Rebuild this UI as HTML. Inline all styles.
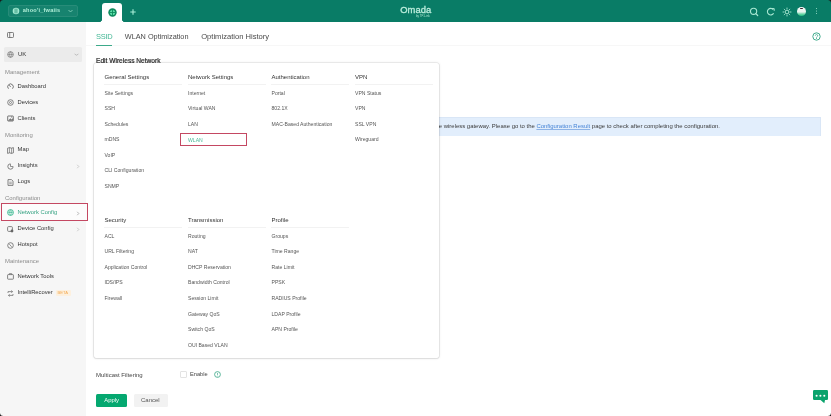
<!DOCTYPE html>
<html><head><meta charset="utf-8">
<style>
*{box-sizing:border-box;margin:0;padding:0}
html,body{width:831px;height:416px;overflow:hidden;background:#fff;-webkit-font-smoothing:antialiased;font-family:"Liberation Sans",sans-serif;color:#333}
.abs{position:absolute}
.t{position:absolute;white-space:nowrap;line-height:1}
#hdr{position:absolute;left:0;top:0;width:831px;height:22px;background:#097c66}
#side{position:absolute;left:0;top:22px;width:86px;height:394px;background:#f6f6f6}
.sl{position:absolute;left:5px;font-size:5.95px;color:#8c8c8c;line-height:1;white-space:nowrap}
.si{position:absolute;left:17.6px;font-size:5.8px;color:#333;line-height:1;white-space:nowrap}
.ic{position:absolute;left:6.5px;width:7px;height:7px}
.chev{position:absolute;left:76px;width:4px;height:5px}
#pop{position:absolute;left:94px;top:62.8px;width:345px;height:295.7px;background:#fff;border-radius:2px;box-shadow:0 0 0 0.6px rgba(0,0,0,0.1),0 0 3px rgba(0,0,0,0.12),0 1px 2px rgba(0,0,0,0.06)}
.ph{position:absolute;font-size:6px;color:#333;line-height:1;white-space:nowrap}
.pd{position:absolute;height:1px;width:78px;background:#f2f2f2}
.pi{position:absolute;font-size:5.1px;color:#555;line-height:1;white-space:nowrap}
</style></head>
<body><div id="wrap" style="position:absolute;left:0;top:0;width:831px;height:416px;will-change:transform">
<div id="hdr">
  <div class="abs" style="left:7.8px;top:4.8px;width:70px;height:12px;border-radius:3px;background:rgba(255,255,255,0.06);box-shadow:inset 0 0 0 0.7px rgba(255,255,255,0.1)"></div>
  <svg class="abs" style="left:12.3px;top:7.4px" width="8" height="8" viewBox="0 0 8 8"><circle cx="4" cy="4" r="3.3" fill="#a3ead2"/><path d="M3.1 1.6v4.8M4.9 1.6v4.8" stroke="#1f8a70" stroke-width="0.75"/></svg>
  <div class="t" style="left:22.8px;top:8.4px;font-size:5.6px;font-weight:bold;color:#aeeed7;letter-spacing:0.2px">ahoo'i_fwaiis</div>
  <svg class="abs" style="left:68px;top:9px" width="5" height="4" viewBox="0 0 5 4"><path d="M0.5 1l2 2 2-2" fill="none" stroke="#8fd9c2" stroke-width="0.8"/></svg>
  <!-- tab -->
  <div class="abs" style="left:102px;top:3px;width:20px;height:19px;background:#fff;border-radius:3px 3px 0 0"></div>
  <div class="abs" style="left:99px;top:19px;width:3px;height:3px;background:radial-gradient(circle at 0 0,#097c66 2.9px,#fff 3px)"></div>
  <div class="abs" style="left:122px;top:19px;width:3px;height:3px;background:radial-gradient(circle at 100% 0,#097c66 2.9px,#fff 3px)"></div>
  <svg class="abs" style="left:107.5px;top:8.2px" width="9" height="9" viewBox="0 0 9 9"><circle cx="4.5" cy="4.5" r="4.2" fill="#0d8a5e"/><circle cx="4.5" cy="4.5" r="2.6" fill="#5be0a8"/><path d="M4.5 1.5v6M1.8 4.5h5.4" stroke="#0d8a5e" stroke-width="0.9"/></svg>
  <svg class="abs" style="left:130px;top:8.7px" width="6" height="6" viewBox="0 0 6 6"><path d="M3 0.3v5.4M0.3 3h5.4" stroke="#a8eed8" stroke-width="1.1"/></svg>
  <!-- logo -->
  <div class="t" style="left:400.2px;top:4.6px;font-size:9.4px;color:#bdeedd;letter-spacing:0.05px;-webkit-text-stroke:0.3px #bdeedd">Omada</div>
  <div class="t" style="left:416px;top:14.5px;font-size:2.9px;color:#a9e4cf">by TP-Link</div>
  <!-- right icons -->
  <svg class="abs" style="left:749px;top:7.3px" width="10" height="10" viewBox="0 0 10 10"><circle cx="4.6" cy="4.3" r="3.1" fill="none" stroke="#a9e8d3" stroke-width="1.1"/><path d="M6.8 6.6l1.9 1.9" stroke="#a9e8d3" stroke-width="1.2" stroke-linecap="round"/></svg>
  <svg class="abs" style="left:765.5px;top:7.3px" width="10" height="10" viewBox="0 0 10 10"><path d="M7.6 6.3A3.3 3.3 0 1 1 7.3 2.6" fill="none" stroke="#a9e8d3" stroke-width="1.1"/><path d="M5.9 1.6h2.3v2.2" fill="none" stroke="#a9e8d3" stroke-width="1"/></svg>
  <svg class="abs" style="left:781.5px;top:7px" width="10" height="10" viewBox="0 0 10 10"><circle cx="5" cy="5" r="1.9" fill="none" stroke="#a9e8d3" stroke-width="1"/><path d="M5 0.6v1.5M5 7.9v1.5M0.6 5h1.5M7.9 5h1.5M1.9 1.9l1 1M7.1 7.1l1 1M1.9 8.1l1-1M7.1 2.9l1-1" stroke="#a9e8d3" stroke-width="0.9"/></svg>
  <div class="abs" style="left:796.8px;top:7.1px;width:9px;height:9px;border-radius:50%;background:linear-gradient(to bottom,#f4f6f5 0%,#e8f4ef 55%,#6fd6a8 78%,#1fbd7e 100%)"></div>
  <div class="abs" style="left:799.8px;top:7.9px;width:3.4px;height:1.5px;border-radius:2px 2px 1px 1px;background:#3d2a2e"></div>
  <div class="abs" style="left:815.6px;top:8.2px;width:1.3px;height:1.3px;border-radius:50%;background:#a9e8d3;box-shadow:0 2.5px 0 #a9e8d3,0 5px 0 #a9e8d3"></div>
</div>

<div id="side">
  <svg class="abs" style="left:7px;top:9.5px" width="7" height="6" viewBox="0 0 7 6"><rect x="0.5" y="0.5" width="6" height="5" rx="0.8" fill="none" stroke="#5a5a5a" stroke-width="0.75"/><path d="M2.7 0.5v5" stroke="#5a5a5a" stroke-width="0.75"/></svg>
  <div class="abs" style="left:3.8px;top:25px;width:78.5px;height:14.8px;background:#ebebeb;border-radius:1.5px"></div>
  <svg class="abs" style="left:7.3px;top:28.5px" width="7" height="7" viewBox="0 0 7 7"><circle cx="3.5" cy="3.5" r="2.8" fill="none" stroke="#777" stroke-width="0.8"/><path d="M0.8 3.5h5.4" stroke="#777" stroke-width="0.6"/><path d="M3.5 0.7c-1.3 1.7-1.3 3.9 0 5.6M3.5 0.7c1.3 1.7 1.3 3.9 0 5.6" fill="none" stroke="#777" stroke-width="0.6"/></svg>
  <div class="t" style="left:18px;top:29.3px;font-size:6px;color:#333">UK</div>
  <svg class="abs" style="left:74px;top:30.8px" width="5" height="3" viewBox="0 0 5 3"><path d="M0.6 1l1.9 1.2 1.9-1.2" fill="none" stroke="#aaa" stroke-width="0.7"/></svg>

  <div class="abs" style="left:0;top:0.7px;width:86px;height:300px">
  <div class="sl" style="top:47.5px">Management</div>
  <svg class="ic" style="top:60.5px" viewBox="0 0 7 7"><path d="M1.5 5.7A2.8 2.8 0 1 1 5.5 5.7" fill="none" stroke="#666" stroke-width="0.9"/><path d="M3.6 3.9L2.4 2.2" stroke="#666" stroke-width="0.9"/></svg>
  <div class="si" style="top:61px">Dashboard</div>
  <svg class="ic" style="top:76.5px" viewBox="0 0 7 7"><circle cx="3.5" cy="3.5" r="2.8" fill="none" stroke="#666" stroke-width="0.8"/><circle cx="3.5" cy="3.5" r="1" fill="none" stroke="#666" stroke-width="0.7"/></svg>
  <div class="si" style="top:77px">Devices</div>
  <svg class="ic" style="top:92.5px" viewBox="0 0 7 7"><rect x="0.7" y="1" width="5.6" height="5" rx="0.4" fill="none" stroke="#666" stroke-width="0.9"/><path d="M0.9 5.8L3.4 3.3 4.6 4.5 6.1 3.0V5.8z" fill="#777"/><path d="M4.6 1.2v1.6" stroke="#666" stroke-width="0.6"/></svg>
  <div class="si" style="top:93px">Clients</div>

  <div class="sl" style="top:110px">Monitoring</div>
  <svg class="ic" style="top:124px" viewBox="0 0 7 7"><path d="M0.6 1.2l1.9-0.6 2 0.6 1.9-0.6v5.2l-1.9 0.6-2-0.6-1.9 0.6z" fill="none" stroke="#666" stroke-width="0.8"/><path d="M2.5 0.6v5.2M4.5 1.2v5.2" stroke="#666" stroke-width="0.6"/></svg>
  <div class="si" style="top:124.5px">Map</div>
  <svg class="ic" style="top:140px" viewBox="0 0 7 7"><path d="M6.2 3.8A2.7 2.7 0 1 1 3.2 0.8" fill="none" stroke="#666" stroke-width="0.8"/><path d="M3.5 0.8v2.7h2.7" fill="none" stroke="#666" stroke-width="0.7"/></svg>
  <div class="si" style="top:140.5px">Insights</div>
  <svg class="chev" style="top:141px" viewBox="0 0 4 5"><path d="M1.2 0.8l1.6 1.7-1.6 1.7" fill="none" stroke="#bbb" stroke-width="0.7"/></svg>
  <svg class="ic" style="top:156px" viewBox="0 0 7 7"><path d="M1 0.6h3.5l1.5 1.5v4.3H1z" fill="none" stroke="#666" stroke-width="0.8"/><path d="M2.2 3.2h2.6M2.2 4.7h2.6" stroke="#666" stroke-width="0.6"/></svg>
  <div class="si" style="top:156.5px">Logs</div>

  <div class="sl" style="top:173.5px">Configuration</div>
  <div class="abs" style="left:1.2px;top:180.5px;width:86.8px;height:17.5px;border:1.3px solid #c44862;background:#fcfcfc"></div>
  <svg class="ic" style="top:186.5px" viewBox="0 0 7 7"><circle cx="3.5" cy="3.5" r="2.9" fill="none" stroke="#2fb58a" stroke-width="0.9"/><path d="M1.2 3.3h4.6" stroke="#2fb58a" stroke-width="0.8"/><path d="M3.5 0.8c-1.2 1.6-1.2 3.8 0 5.4M3.5 0.8c1.2 1.6 1.2 3.8 0 5.4" fill="none" stroke="#2fb58a" stroke-width="0.5"/></svg>
  <div class="si" style="top:187.5px;color:#35a282">Network Config</div>
  <svg class="chev" style="top:188px" viewBox="0 0 4 5"><path d="M1.2 0.8l1.6 1.7-1.6 1.7" fill="none" stroke="#999" stroke-width="0.7"/></svg>
  <svg class="ic" style="top:203px" viewBox="0 0 7 7"><rect x="0.6" y="0.6" width="4.8" height="4.8" rx="1" fill="none" stroke="#666" stroke-width="0.8"/><circle cx="5" cy="5" r="1.4" fill="#666"/></svg>
  <div class="si" style="top:203.5px">Device Config</div>
  <svg class="chev" style="top:204px" viewBox="0 0 4 5"><path d="M1.2 0.8l1.6 1.7-1.6 1.7" fill="none" stroke="#bbb" stroke-width="0.7"/></svg>
  <svg class="ic" style="top:219px" viewBox="0 0 7 7"><circle cx="3.5" cy="3.5" r="2.8" fill="none" stroke="#666" stroke-width="0.8"/><path d="M2.3 2.2l2.4 2.6" stroke="#666" stroke-width="0.7"/></svg>
  <div class="si" style="top:219.5px">Hotspot</div>

  <div class="sl" style="top:236.5px">Maintenance</div>
  <svg class="ic" style="top:250.5px" viewBox="0 0 7 7"><rect x="0.6" y="1.6" width="5.8" height="4.6" rx="0.6" fill="none" stroke="#666" stroke-width="0.8"/><path d="M2.3 1.6v-1h2.4v1" fill="none" stroke="#666" stroke-width="0.7"/></svg>
  <div class="si" style="top:251px">Network Tools</div>
  <svg class="ic" style="top:267px" viewBox="0 0 7 7"><path d="M1 3V1.6h4.5M4.3 0.5l1.2 1.1-1.2 1.1M6 4v1.4H1.5M2.7 6.5L1.5 5.4l1.2-1.1" fill="none" stroke="#666" stroke-width="0.7"/></svg>
  <div class="si" style="top:267.5px">IntelliRecover</div>
  <div class="abs" style="left:55.5px;top:267px;width:15.5px;height:6px;border-radius:1px;background:#fdf0de"></div>
  <div class="t" style="left:57.6px;top:268.3px;font-size:4.1px;color:#f3ab55">BETA</div>
  </div>
</div>

<!-- main content -->
<div class="abs" style="left:86px;top:45px;width:745px;height:1px;background:#f7f7f7"></div>
<div class="t" style="left:96px;top:32.6px;font-size:7.5px;color:#45b896;letter-spacing:-0.3px">SSID</div>
<div class="abs" style="left:96px;top:44.6px;width:16px;height:1.4px;background:#3daa8a"></div>
<div class="t" style="left:124.8px;top:33.1px;font-size:7.3px;color:#4a4a4a">WLAN Optimization</div>
<div class="t" style="left:201.2px;top:33.1px;font-size:7.6px;color:#4a4a4a">Optimization History</div>
<svg class="abs" style="left:812.2px;top:31.7px" width="9" height="9" viewBox="0 0 9 9"><circle cx="4.5" cy="4.5" r="3.7" fill="none" stroke="#3aa888" stroke-width="0.95"/><path d="M3.3 3.6a1.2 1.2 0 1 1 1.8 1.05c-0.45 0.25-0.6 0.45-0.6 0.95" fill="none" stroke="#3aa888" stroke-width="0.8"/><circle cx="4.5" cy="6.6" r="0.5" fill="#3aa888"/></svg>

<div class="t" style="left:96px;top:58px;font-size:6.6px;color:#2a2a2a;-webkit-text-stroke:0.2px #2a2a2a">Edit Wireless Network</div>

<!-- banner -->
<div class="abs" style="left:420px;top:116.5px;width:401px;height:19.3px;background:#e2eefc;border-top:0.6px solid #d9e6f6;border-right:0.6px solid #d9e6f6"></div>
<div class="t" style="left:435.5px;top:124.3px;font-size:5.95px;color:#3a3a3a">he wireless gateway. Please go to the <span style="color:#4684d6;text-decoration:underline;text-decoration-color:#8fb4e6">Configuration Result</span> page to check after completing the configuration.</div>

<!-- form below -->
<div class="t" style="left:96px;top:371.9px;font-size:6px;color:#444">Multicast Filtering</div>
<div class="abs" style="left:180px;top:371.3px;width:7px;height:7px;border:0.9px solid #e3e3e3;border-radius:1px;background:#fff"></div>
<div class="t" style="left:190px;top:371.9px;font-size:5.7px;color:#444">Enable</div>
<svg class="abs" style="left:214px;top:371.2px" width="7" height="7" viewBox="0 0 7 7"><circle cx="3.5" cy="3.5" r="2.9" fill="none" stroke="#4aae90" stroke-width="0.9"/><path d="M3.5 1.9v2" stroke="#4aae90" stroke-width="0.75"/><circle cx="3.5" cy="5" r="0.45" fill="#4aae90"/></svg>
<div class="abs" style="left:96px;top:394px;width:31px;height:13px;background:#05a870;border-radius:1.5px"></div>
<div class="t" style="left:104.3px;top:397.5px;font-size:5.9px;color:#fff">Apply</div>
<div class="abs" style="left:134px;top:394px;width:34px;height:13px;background:#f2f2f2;border-radius:1.5px"></div>
<div class="t" style="left:141px;top:397px;font-size:6px;color:#555">Cancel</div>

<!-- chat -->
<div class="abs" style="left:813px;top:389.8px;width:15.2px;height:10.6px;background:#0aa36c;border-radius:1.2px"></div>
<svg class="abs" style="left:820px;top:400px" width="6" height="4" viewBox="0 0 6 4"><path d="M0.5 0L5 0 4.3 3.2z" fill="#0aa36c"/></svg>
<svg class="abs" style="left:813px;top:389.8px" width="16" height="11" viewBox="0 0 16 11"><circle cx="3.6" cy="5.7" r="1.05" fill="#fff"/><circle cx="7.4" cy="5.7" r="1.05" fill="#fff"/><circle cx="11.3" cy="5.7" r="1.05" fill="#fff"/></svg>

<!-- popup -->
<div id="pop"><div class="abs" style="left:0;top:-0.8px">
  <div class="ph" style="left:10.5px;top:11.5px">General Settings</div>
  <div class="pd" style="left:10px;top:21.5px"></div>
  <div class="pi" style="left:10.5px;top:28.5px">Site Settings</div>
  <div class="pi" style="left:10.5px;top:44px">SSH</div>
  <div class="pi" style="left:10.5px;top:59.5px">Schedules</div>
  <div class="pi" style="left:10.5px;top:75px">mDNS</div>
  <div class="pi" style="left:10.5px;top:90.5px">VoIP</div>
  <div class="pi" style="left:10.5px;top:106px">CLI Configuration</div>
  <div class="pi" style="left:10.5px;top:121.5px">SNMP</div>

  <div class="ph" style="left:94px;top:11.5px">Network Settings</div>
  <div class="pd" style="left:93.5px;top:21.5px"></div>
  <div class="pi" style="left:94px;top:28.5px">Internet</div>
  <div class="pi" style="left:94px;top:44px">Virtual WAN</div>
  <div class="pi" style="left:94px;top:59.5px">LAN</div>
  <div class="abs" style="left:86px;top:71px;width:67px;height:13px;border:1.2px solid #c44862"></div>
  <div class="pi" style="left:94px;top:75.6px;color:#4bb898">WLAN</div>

  <div class="ph" style="left:177.5px;top:11.5px">Authentication</div>
  <div class="pd" style="left:177px;top:21.5px"></div>
  <div class="pi" style="left:177.5px;top:28.5px">Portal</div>
  <div class="pi" style="left:177.5px;top:44px">802.1X</div>
  <div class="pi" style="left:177.5px;top:59.5px">MAC-Based Authentication</div>

  <div class="ph" style="left:261px;top:11.5px">VPN</div>
  <div class="pd" style="left:260.5px;top:21.5px"></div>
  <div class="pi" style="left:261px;top:28.5px">VPN Status</div>
  <div class="pi" style="left:261px;top:44px">VPN</div>
  <div class="pi" style="left:261px;top:59.5px">SSL VPN</div>
  <div class="pi" style="left:261px;top:75px">Wireguard</div>

  <div class="ph" style="left:10.5px;top:154.5px">Security</div>
  <div class="pd" style="left:10px;top:164.5px"></div>
  <div class="pi" style="left:10.5px;top:171.5px">ACL</div>
  <div class="pi" style="left:10.5px;top:187.14px">URL Filtering</div>
  <div class="pi" style="left:10.5px;top:202.78px">Application Control</div>
  <div class="pi" style="left:10.5px;top:218.42px">IDS/IPS</div>
  <div class="pi" style="left:10.5px;top:234.06px">Firewall</div>

  <div class="ph" style="left:94px;top:154.5px">Transmission</div>
  <div class="pd" style="left:93.5px;top:164.5px"></div>
  <div class="pi" style="left:94px;top:171.5px">Routing</div>
  <div class="pi" style="left:94px;top:187.14px">NAT</div>
  <div class="pi" style="left:94px;top:202.78px">DHCP Reservation</div>
  <div class="pi" style="left:94px;top:218.42px">Bandwidth Control</div>
  <div class="pi" style="left:94px;top:234.06px">Session Limit</div>
  <div class="pi" style="left:94px;top:249.7px">Gateway QoS</div>
  <div class="pi" style="left:94px;top:265.34px">Switch QoS</div>
  <div class="pi" style="left:94px;top:280.98px">OUI Based VLAN</div>

  <div class="ph" style="left:177.5px;top:154.5px">Profile</div>
  <div class="pd" style="left:177px;top:164.5px"></div>
  <div class="pi" style="left:177.5px;top:171.5px">Groups</div>
  <div class="pi" style="left:177.5px;top:187.14px">Time Range</div>
  <div class="pi" style="left:177.5px;top:202.78px">Rate Limit</div>
  <div class="pi" style="left:177.5px;top:218.42px">PPSK</div>
  <div class="pi" style="left:177.5px;top:234.06px">RADIUS Profile</div>
  <div class="pi" style="left:177.5px;top:249.7px">LDAP Profile</div>
  <div class="pi" style="left:177.5px;top:265.34px">APN Profile</div>
</div></div>
<div class="abs" style="left:0;top:0;width:831px;height:416px;pointer-events:none;border-radius:3.5px;box-shadow:0 0 0 4px #1a1a1a"></div>
</div></body></html>
